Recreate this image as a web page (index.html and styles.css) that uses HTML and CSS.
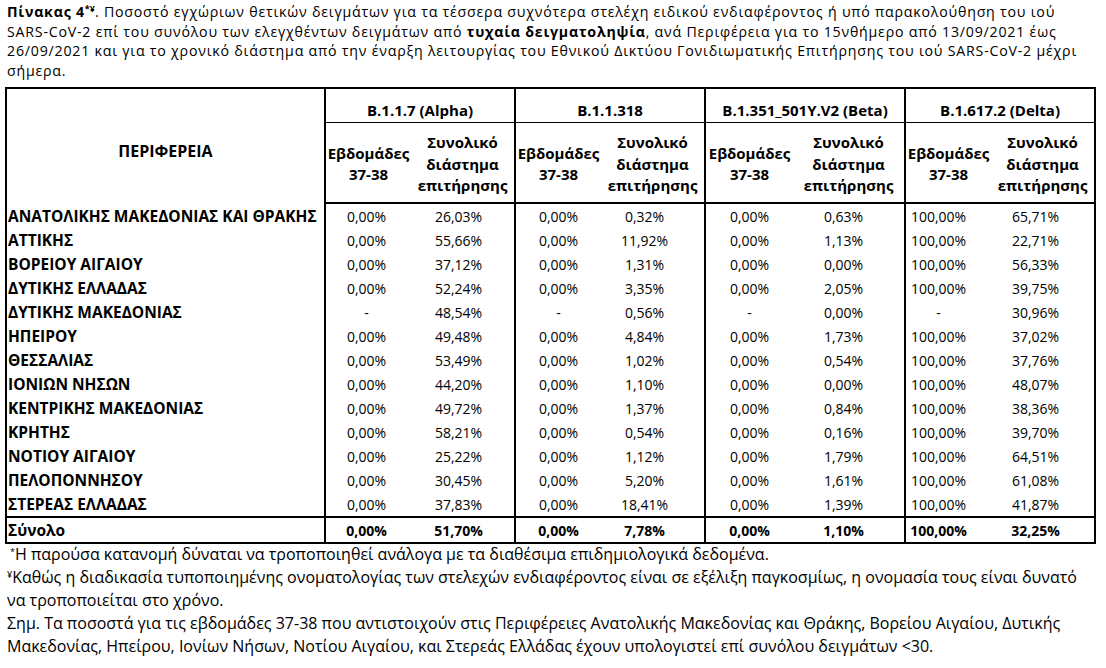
FILE: index.html
```html
<!DOCTYPE html>
<html lang="el">
<head>
<meta charset="utf-8">
<title>Πίνακας 4</title>
<link rel="stylesheet" href="styles.css">
</head>
<body>
<div class="page">
  <p class="caption"><b>Πίνακας 4<sup>*¥</sup></b>. Ποσοστό εγχώριων θετικών δειγμάτων για τα τέσσερα συχνότερα στελέχη ειδικού ενδιαφέροντος ή υπό παρακολούθηση του ιού<br>SARS-CoV-2 επί του συνόλου των ελεγχθέντων δειγμάτων από <b>τυχαία δειγματοληψία</b>, ανά Περιφέρεια για το 15νθήμερο από 13/09/2021 έως<br>26/09/2021 και για το χρονικό διάστημα από την έναρξη λειτουργίας του Εθνικού Δικτύου Γονιδιωματικής Επιτήρησης του ιού SARS-CoV-2 μέχρι<br>σήμερα.</p>

  <table class="grid">
    <colgroup>
      <col class="c-region">
      <col class="c-w"><col class="c-t">
      <col class="c-w"><col class="c-t">
      <col class="c-wb"><col class="c-tb">
      <col class="c-w"><col class="c-t">
    </colgroup>
    <thead>
      <tr class="h1">
        <th rowspan="2" class="region-head">ΠΕΡΙΦΕΡΕΙΑ</th>
        <th colspan="2" class="grp">B.1.1.7 (Alpha)</th>
        <th colspan="2" class="grp">B.1.1.318</th>
        <th colspan="2" class="grp">B.1.351_501Y.V2 (Beta)</th>
        <th colspan="2" class="grp">B.1.617.2 (Delta)</th>
      </tr>
      <tr class="h2">
        <th>Εβδομάδες<br>37-38</th><th>Συνολικό<br>διάστημα<br>επιτήρησης</th>
        <th>Εβδομάδες<br>37-38</th><th>Συνολικό<br>διάστημα<br>επιτήρησης</th>
        <th>Εβδομάδες<br>37-38</th><th>Συνολικό<br>διάστημα<br>επιτήρησης</th>
        <th>Εβδομάδες<br>37-38</th><th>Συνολικό<br>διάστημα<br>επιτήρησης</th>
      </tr>
    </thead>
    <tbody>
      <tr><th>ΑΝΑΤΟΛΙΚΗΣ ΜΑΚΕΔΟΝΙΑΣ ΚΑΙ ΘΡΑΚΗΣ</th><td>0,00%</td><td>26,03%</td><td>0,00%</td><td>0,32%</td><td>0,00%</td><td>0,63%</td><td>100,00%</td><td>65,71%</td></tr>
      <tr><th>ΑΤΤΙΚΗΣ</th><td>0,00%</td><td>55,66%</td><td>0,00%</td><td>11,92%</td><td>0,00%</td><td>1,13%</td><td>100,00%</td><td>22,71%</td></tr>
      <tr><th>ΒΟΡΕΙΟΥ ΑΙΓΑΙΟΥ</th><td>0,00%</td><td>37,12%</td><td>0,00%</td><td>1,31%</td><td>0,00%</td><td>0,00%</td><td>100,00%</td><td>56,33%</td></tr>
      <tr><th>ΔΥΤΙΚΗΣ ΕΛΛΑΔΑΣ</th><td>0,00%</td><td>52,24%</td><td>0,00%</td><td>3,35%</td><td>0,00%</td><td>2,05%</td><td>100,00%</td><td>39,75%</td></tr>
      <tr><th>ΔΥΤΙΚΗΣ ΜΑΚΕΔΟΝΙΑΣ</th><td>-</td><td>48,54%</td><td>-</td><td>0,56%</td><td>-</td><td>0,00%</td><td>-</td><td>30,96%</td></tr>
      <tr><th>ΗΠΕΙΡΟΥ</th><td>0,00%</td><td>49,48%</td><td>0,00%</td><td>4,84%</td><td>0,00%</td><td>1,73%</td><td>100,00%</td><td>37,02%</td></tr>
      <tr><th>ΘΕΣΣΑΛΙΑΣ</th><td>0,00%</td><td>53,49%</td><td>0,00%</td><td>1,02%</td><td>0,00%</td><td>0,54%</td><td>100,00%</td><td>37,76%</td></tr>
      <tr><th>ΙΟΝΙΩΝ ΝΗΣΩΝ</th><td>0,00%</td><td>44,20%</td><td>0,00%</td><td>1,10%</td><td>0,00%</td><td>0,00%</td><td>100,00%</td><td>48,07%</td></tr>
      <tr><th>ΚΕΝΤΡΙΚΗΣ ΜΑΚΕΔΟΝΙΑΣ</th><td>0,00%</td><td>49,72%</td><td>0,00%</td><td>1,37%</td><td>0,00%</td><td>0,84%</td><td>100,00%</td><td>38,36%</td></tr>
      <tr><th>ΚΡΗΤΗΣ</th><td>0,00%</td><td>58,21%</td><td>0,00%</td><td>0,54%</td><td>0,00%</td><td>0,16%</td><td>100,00%</td><td>39,70%</td></tr>
      <tr><th>ΝΟΤΙΟΥ ΑΙΓΑΙΟΥ</th><td>0,00%</td><td>25,22%</td><td>0,00%</td><td>1,12%</td><td>0,00%</td><td>1,79%</td><td>100,00%</td><td>64,51%</td></tr>
      <tr><th>ΠΕΛΟΠΟΝΝΗΣΟΥ</th><td>0,00%</td><td>30,45%</td><td>0,00%</td><td>5,20%</td><td>0,00%</td><td>1,61%</td><td>100,00%</td><td>61,08%</td></tr>
      <tr><th>ΣΤΕΡΕΑΣ ΕΛΛΑΔΑΣ</th><td>0,00%</td><td>37,83%</td><td>0,00%</td><td>18,41%</td><td>0,00%</td><td>1,39%</td><td>100,00%</td><td>41,87%</td></tr>
    </tbody>
    <tfoot>
      <tr><th>Σύνολο</th><td>0,00%</td><td>51,70%</td><td>0,00%</td><td>7,78%</td><td>0,00%</td><td>1,10%</td><td>100,00%</td><td>32,25%</td></tr>
    </tfoot>
  </table>

  <div class="notes">
    <p class="note-first"><sup>*</sup>Η παρούσα κατανομή δύναται να τροποποιηθεί ανάλογα με τα διαθέσιμα επιδημιολογικά δεδομένα.</p>
    <p><sup>¥</sup>Καθώς η διαδικασία τυποποιημένης ονοματολογίας των στελεχών ενδιαφέροντος είναι σε εξέλιξη παγκοσμίως, η ονομασία τους είναι δυνατό<br>να τροποποιείται στο χρόνο.</p>
    <p>Σημ. Τα ποσοστά για τις εβδομάδες 37-38 που αντιστοιχούν στις Περιφέρειες Ανατολικής Μακεδονίας και Θράκης, Βορείου Αιγαίου, Δυτικής<br>Μακεδονίας, Ηπείρου, Ιονίων Νήσων, Νοτίου Αιγαίου, και Στερεάς Ελλάδας έχουν υπολογιστεί επί συνόλου δειγμάτων &lt;30.</p>
  </div>
</div>
</body>
</html>
```

FILE: styles.css
```css
html, body {
  margin: 0;
  padding: 0;
  background: #ffffff;
}

body {
  font-family: "Open Sans", "Noto Sans", "Liberation Sans", sans-serif;
  color: #000000;
}

.page {
  padding: 2px 0 0 7px;
  width: 1099px;
}

.caption {
  margin: 0;
  font-size: 14.2px;
  letter-spacing: 0.78px;
  line-height: 19.5px;
  white-space: nowrap;
}

.caption sup,
.notes sup {
  font-size: 9px;
  letter-spacing: 0;
  line-height: 0;
  vertical-align: 5px;
}

.grid {
  margin: 7px 0 0 -2px;
  border-collapse: collapse;
  table-layout: fixed;
  width: 1091px;
  border: 2px solid #000;
  font-size: 14px;
}

.c-region { width: 319px; }
.c-w { width: 86px; }
.c-t { width: 104px; }
.c-wb { width: 88px; }
.c-tb { width: 112px; }

.grid th,
.grid td {
  padding: 0;
  white-space: nowrap;
}

.grid thead th {
  font-weight: bold;
  text-align: center;
  font-size: 15px;
}

.h1 {
  height: 34px;
}

.h1 .grp {
  padding-top: 10px;
  border-left: 2px solid #000;
  border-bottom: 1px solid #000;
}

.grid .region-head {
  padding-top: 10px;
  font-size: 16px;
}

.h2 {
  height: 81px;
}

.h2 th {
  line-height: 21.5px;
  padding-top: 4px;
  border-bottom: 2px solid #000;
}

.h2 th:nth-child(odd) {
  border-left: 2px solid #000;
}

.grid tbody tr,
.grid tfoot tr {
  height: 24px;
}

.grid tbody th,
.grid tfoot th {
  text-align: left;
  font-weight: bold;
  font-size: 15.5px;
  padding-left: 1px;
  padding-top: 1px;
  line-height: 23px;
}

.grid tbody td,
.grid tfoot td {
  text-align: center;
  padding-top: 1px;
  line-height: 23px;
}

.grid tbody td:nth-child(2),
.grid tbody td:nth-child(4),
.grid tbody td:nth-child(6),
.grid tbody td:nth-child(8),
.grid tfoot td:nth-child(2),
.grid tfoot td:nth-child(4),
.grid tfoot td:nth-child(6),
.grid tfoot td:nth-child(8) {
  border-left: 2px solid #000;
}

.grid td:nth-child(2) { padding-right: 4px; }
.grid td:nth-child(3) { padding-right: 8px; }
.grid td:nth-child(5) { padding-right: 16px; }
.grid td:nth-child(7) { padding-right: 10px; }
.grid td:nth-child(8) { padding-right: 20px; }
.grid td:nth-child(9) { padding-right: 14px; }

.grid tfoot tr {
  border-top: 2px solid #000;
}

.grid tfoot th,
.grid tfoot td {
  font-weight: bold;
}

.notes {
  margin-top: -1px;
  font-size: 16px;
  line-height: 23px;
  white-space: nowrap;
}

.notes p {
  margin: 0;
}

.notes .note-first {
  padding-left: 3px;
}
```
